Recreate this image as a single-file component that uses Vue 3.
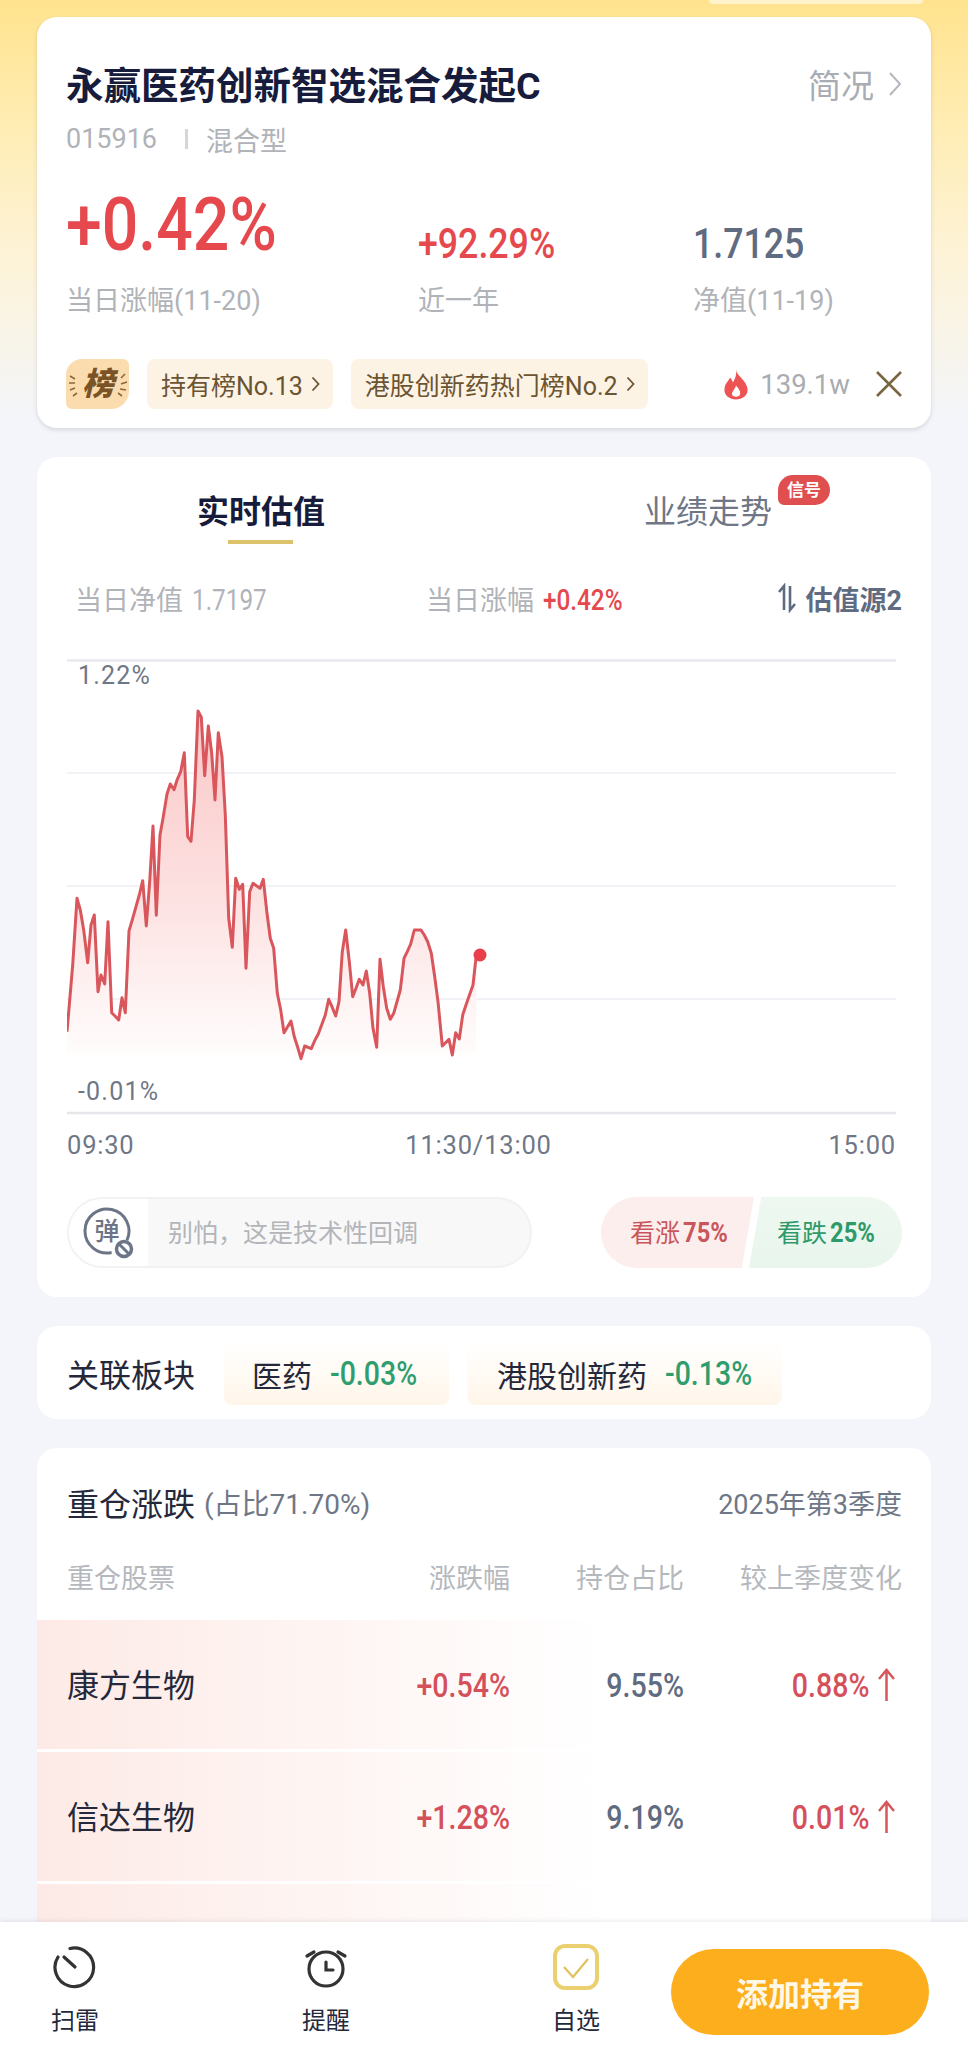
<template>
  <div class="page">
    <div class="scroll">
      <div class="top-pill"></div>

      <section class="card head-card">
        <div class="title-row">
          <div class="fund-name">永赢医药创新智选混合发起C</div>
          <div class="brief">
            简况
            <svg width="14" height="26" viewBox="0 0 14 26" fill="none" stroke="#b4b7bc" stroke-width="2"><path d="M2 2l10 11L2 24" /></svg>
          </div>
        </div>
        <div class="sub-row">
          <span class="code">015916</span>
          <i class="sub-line"></i>
          <span>混合型</span>
        </div>
        <div class="stats">
          <div class="stat">
            <div class="stat-val big red num">+0.42%</div>
            <div class="stat-label">当日涨幅(11-20)</div>
          </div>
          <div class="stat">
            <div class="stat-val red num">+92.29%</div>
            <div class="stat-label">近一年</div>
          </div>
          <div class="stat">
            <div class="stat-val slate num">1.7125</div>
            <div class="stat-label">净值(11-19)</div>
          </div>
        </div>
        <div class="tag-row">
          <svg class="rank-icon" width="64" height="50" viewBox="0 0 64 50">
            <path d="M16 0H57a6 6 0 0 1 6 6V32a18 18 0 0 1-18 18H6a6 6 0 0 1-6-6V16A16 16 0 0 1 16 0z" fill="#fbdcae" />
            <g stroke="#8a6a3c" stroke-width="1.6" fill="none">
              <path d="M4 17l5 3M3 24h6M4 31l5-2M7 37l4-3M59 15l-4 4M61 23l-6 2M60 31l-6-1M56 37l-4-3" />
            </g>
            <text x="32" y="36" text-anchor="middle" class="rank-text">榜</text>
          </svg>
          <span class="tag">持有榜No.13
            <svg width="9" height="16" viewBox="0 0 9 16" fill="none" stroke="#6b5431" stroke-width="1.8"><path d="M1.5 1.5L7.5 8l-6 6.5" /></svg>
          </span>
          <span class="tag">港股创新药热门榜No.2
            <svg width="9" height="16" viewBox="0 0 9 16" fill="none" stroke="#6b5431" stroke-width="1.8"><path d="M1.5 1.5L7.5 8l-6 6.5" /></svg>
          </span>
          <span class="hot">
            <svg width="28" height="33" viewBox="0 0 28 32">
              <path fill="#ee5353" d="M14 1C15 8 24 11 25.500 20C26.500 27 20 31 14 31C8 31 1.500 27 2.500 20C3 15 7 12 8 9C10 11 10.500 13 11 14C13 10 15 6 14 1Z" />
              <path fill="#fff" d="M14 17C16 20 19 22 18 26C17 29 11 29 10 26C9.500 23 13 21 14 17Z" />
            </svg>
            <span>139.1w</span>
          </span>
          <svg class="close" width="26" height="26" viewBox="0 0 26 26" stroke="#7a6542" stroke-width="2.600"><path d="M1 1l24 24M25 1L1 25" /></svg>
        </div>
      </section>

      <section class="card chart-card">
        <div class="tabs">
          <div class="tab active">实时估值</div>
          <div class="tab">业绩走势<span class="signal">信号</span></div>
        </div>
        <div class="metrics">
          <div class="metric m1">当日净值 <span class="num m-val">1.7197</span></div>
          <div class="metric m2">当日涨幅 <span class="num m-val red bold">+0.42%</span></div>
          <div class="source">
            <svg width="19" height="30" viewBox="0 0 19 30" fill="none" stroke="#5f6b80" stroke-width="2.600"><path d="M6 27V3L1 9M12 3v24l5-6" /></svg>
            估值源2
          </div>
        </div>
        <div class="chart">
          <svg width="829" height="458" viewBox="66 658 829 458">
            <defs>
              <linearGradient id="area" x1="0" y1="0" x2="0" y2="1">
                <stop offset="0" stop-color="#fac6c6" />
                <stop offset="0.55" stop-color="#fde2e2" />
                <stop offset="1" stop-color="#fffdfd" />
              </linearGradient>
            </defs>
            <line x1="66" x2="895" y1="660.500" y2="660.500" stroke="#e7e9ec" stroke-width="2.500" />
            <line v-for="y in midLines" :key="y" x1="66" x2="895" :y1="y" :y2="y" stroke="#f1f2f5" stroke-width="2" />
            <line x1="66" x2="895" y1="1113" y2="1113" stroke="#e4e6ea" stroke-width="2.500" />
            <path :d="areaPath" fill="url(#area)" />
            <path :d="linePath" fill="none" stroke="#d9575c" stroke-width="3" stroke-linejoin="round" />
            <circle cx="479" cy="955" r="6.500" fill="#e8404a" />
          </svg>
          <span class="y-label top">1.22%</span>
          <span class="y-label bottom">-0.01%</span>
        </div>
        <div class="times">
          <span>09:30</span>
          <span class="mid-time">11:30/13:00</span>
          <span>15:00</span>
        </div>
        <div class="bottom-row">
          <div class="danmu">
            <div class="danmu-icon">
              <svg width="52" height="52" viewBox="0 0 52 52" fill="none">
                <path d="M43.900 33.300A22 22 0 1 0 28.600 45.500" stroke="#6b7587" stroke-width="3" />
                <text x="24" y="33" text-anchor="middle" class="danmu-text">弹</text>
                <circle cx="41" cy="42" r="7.500" stroke="#6b7587" stroke-width="3.500" fill="#fff" />
                <path d="M36 37l10 10" stroke="#6b7587" stroke-width="3" />
              </svg>
            </div>
            <div class="danmu-text-box">别怕，这是技术性回调</div>
          </div>
          <div class="vote">
            <div class="vote-up">看涨<b class="num">75%</b></div>
            <div class="vote-down">看跌<b class="num">25%</b></div>
          </div>
        </div>
      </section>

      <section class="card sector-card">
        <div class="sector-title">关联板块</div>
        <div class="chip chip-a">医药<span class="num green">-0.03%</span></div>
        <div class="chip chip-b">港股创新药<span class="num green">-0.13%</span></div>
      </section>

      <section class="card hold-card">
        <div class="hold-head">
          <span class="hold-title">重仓涨跌</span>
          <span class="hold-ratio">(占比71.70%)</span>
          <span class="hold-season">2025年第3季度</span>
        </div>
        <div class="hold-grid hold-cols">
          <span>重仓股票</span>
          <span class="right">涨跌幅</span>
          <span class="right">持仓占比</span>
          <span class="right">较上季度变化</span>
        </div>
        <div v-for="row in holdings" :key="row.name" class="hold-grid hold-row">
          <span class="stock">{{ row.name }}</span>
          <span class="right num val rise">{{ row.pct }}</span>
          <span class="right num val slate">{{ row.weight }}</span>
          <span class="change">
            <span class="right num val rise">{{ row.change }}</span>
            <svg width="17" height="33" viewBox="0 0 17 33" fill="none" stroke="#d8575a" stroke-width="2.500"><path d="M8.500 33V2M1 11l7.500-9L16 11" /></svg>
          </span>
        </div>
        <div class="hold-grid hold-row"></div>
      </section>
    </div>

    <footer class="bar">
      <div class="bar-item scan">
        <svg width="44" height="44" viewBox="0 0 44 44" fill="none" stroke="#333" stroke-width="3.200" stroke-linecap="round">
          <path d="M17 3.500A19.300 19.300 0 1 1 5 12" />
          <path d="M22 22L11 12" />
        </svg>
        <span>扫雷</span>
      </div>
      <div class="bar-item remind">
        <svg width="44" height="44" viewBox="0 0 44 44" fill="none" stroke="#333" stroke-width="3.200" stroke-linecap="round">
          <circle cx="22" cy="24" r="17" />
          <path d="M3 11l7-4M34 7l7 4" />
          <path d="M22 17v8h7" />
        </svg>
        <span>提醒</span>
      </div>
      <div class="bar-item pick">
        <svg width="46" height="46" viewBox="0 0 46 46" fill="none">
          <rect x="2" y="2" width="42" height="42" rx="10" stroke="#ebd06f" stroke-width="4" />
          <path d="M11 23l9 10L35 15" stroke="#e2c25e" stroke-width="2.200" />
        </svg>
        <span>自选</span>
      </div>
      <button class="add-btn">添加持有</button>
    </footer>
  </div>
</template>

<script setup>
const raw = [
  [78, 1175], [95, 975], [108, 775], [118, 810], [128, 870], [140, 968], [150, 855], [160, 825], [171, 1055], [180, 1005],
  [191, 1032], [201, 845], [212, 1118], [222, 1128], [233, 1140], [243, 1073], [253, 1118], [264, 873], [275, 835], [285, 800],
  [295, 765], [305, 722], [316, 858], [326, 725], [336, 558], [346, 826], [357, 585], [367, 530], [378, 462], [388, 432],
  [399, 449], [409, 418], [419, 395], [430, 338], [440, 590], [450, 604], [460, 480], [471, 213], [481, 232], [491, 407],
  [502, 258], [512, 340], [522, 480], [532, 278], [543, 350], [553, 525], [563, 835], [574, 922], [584, 715], [595, 748],
  [605, 733], [615, 985], [626, 755], [636, 730], [657, 745], [667, 718], [678, 820], [688, 895], [698, 925], [709, 1060],
  [719, 1110], [729, 1178], [750, 1143], [760, 1190], [770, 1222], [780, 1256], [791, 1218], [811, 1226], [822, 1200], [832, 1182],
  [853, 1125], [863, 1078], [873, 1100], [884, 1128], [894, 1085], [904, 935], [914, 870], [925, 965], [935, 1070], [945, 1045],
  [955, 1018], [966, 1035], [976, 993], [986, 1060], [996, 1165], [1007, 1222], [1017, 958], [1027, 1040], [1037, 1105], [1048, 1138],
  [1058, 1120], [1078, 1050], [1089, 955], [1099, 935], [1109, 912], [1120, 870], [1140, 870], [1150, 885], [1160, 905], [1171, 940],
  [1181, 1010], [1191, 1085], [1204, 1218], [1224, 1198], [1234, 1245], [1244, 1178], [1255, 1197], [1265, 1125], [1275, 1095], [1296, 1035],
  [1306, 945],
]

// points were read off a 3x crop starting at (40, 640)
const points = raw.map(([x, y]) => [40 + x / 3, 640 + y / 3])
const linePath = 'M' + points.map(p => p[0].toFixed(1) + ' ' + p[1].toFixed(1)).join('L')
const areaPath = linePath + 'V1054H66Z'
const midLines = [773, 886, 999]

const holdings = [
  { name: '康方生物', pct: '+0.54%', weight: '9.55%', change: '0.88%' },
  { name: '信达生物', pct: '+1.28%', weight: '9.19%', change: '0.01%' },
]
</script>

<style>
html,
body {
  margin: 0;
  overflow: hidden;
}
</style>

<style scoped>
.page {
  width: 968px;
  height: 2061px;
  display: flex;
  flex-direction: column;
  overflow: hidden;
  background: #f3f5fa;
  font-family: Roboto, "Noto Sans CJK SC", sans-serif;
  color: #25283a;
}

.scroll {
  flex: 1;
  min-height: 0;
  overflow: hidden;
  padding: 0 37px;
  background: linear-gradient(180deg, #ffe38e 0, #ffedb5 130px, #fdf3d8 260px, #f3f5fa 420px);
}

.top-pill {
  width: 214px;
  height: 4px;
  margin-left: 672px;
  background: #fff3cd;
  border-radius: 0 0 14px 14px;
}

.card {
  background: #fff;
  border-radius: 20px;
}

/* the numbers in the app use a condensed face, none is installed */
.num {
  display: inline-block;
  font-weight: 500;
  transform: scaleX(0.85);
  transform-origin: left center;
}

.num.right {
  transform: scaleX(0.84);
  transform-origin: right center;
}

.red {
  color: #e5484d;
}

.rise {
  color: #d4505a;
}

.slate {
  color: #5f6b80;
}

.green {
  color: #2f9e6e;
}

.head-card {
  height: 411px;
  margin-top: 13px;
  padding: 41px 29px 0 29px;
  box-sizing: border-box;
  box-shadow: 0 2px 4px rgba(60, 60, 80, 0.16);
}

.title-row {
  display: flex;
  align-items: center;
  justify-content: space-between;
  height: 48px;
}

.fund-name {
  font-size: 37.500px;
  font-weight: 700;
  color: #171c3c;
  white-space: nowrap;
}

.brief {
  display: flex;
  align-items: center;
  gap: 14px;
  padding-top: 3px;
  font-size: 33px;
  color: #a9adb3;
}

.sub-row {
  display: flex;
  align-items: center;
  height: 36px;
  margin-top: 15px;
  font-size: 27px;
  color: #b0b3b8;
}

.sub-line {
  width: 3px;
  height: 20px;
  margin: 0 18px 0 28px;
  background: #d4d6da;
}

.stats {
  display: grid;
  grid-template-columns: 352px 275px 1fr;
  margin-top: 16px;
}

.stat-val {
  display: flex;
  align-items: flex-end;
  height: 92px;
  box-sizing: border-box;
  font-size: 42px;
  line-height: 1;
  white-space: nowrap;
}

.stat-val.big {
  padding-bottom: 3px;
  font-size: 74px;
  transform: scaleX(0.87);
}

.stat-label {
  margin-top: 18px;
  font-size: 27px;
  line-height: 36px;
  color: #b0b3b8;
  white-space: nowrap;
}

.tag-row {
  display: flex;
  align-items: center;
  margin-top: 40px;
}

.rank-icon {
  margin-right: 17px;
  flex: none;
}

.rank-text {
  font-family: "Noto Sans CJK SC", sans-serif;
  font-size: 32px;
  font-weight: 900;
  font-style: italic;
  fill: #7a5326;
}

.tag {
  display: flex;
  align-items: center;
  gap: 8px;
  height: 50px;
  padding: 0 13px 0 14px;
  margin-right: 18px;
  border-radius: 8px;
  background: #fdf3e5;
  color: #6b5431;
  font-size: 25px;
  white-space: nowrap;
}

.hot {
  display: flex;
  align-items: center;
  gap: 10px;
  margin-left: auto;
  font-size: 27.500px;
  color: #a9acb1;
}

.close {
  margin-left: 26px;
}

.chart-card {
  height: 840px;
  margin-top: 29px;
  padding: 0 29px 0 30px;
  box-sizing: border-box;
}

.tabs {
  display: flex;
  height: 110px;
}

.tab {
  position: relative;
  height: 110px;
  line-height: 110px;
  font-size: 32px;
  color: #6f7787;
  margin-left: 319px;
  white-space: nowrap;
}

.tab.active {
  margin-left: 130px;
  font-weight: 700;
  color: #171c3c;
}

.tab.active::after {
  content: "";
  position: absolute;
  left: 31px;
  bottom: 23px;
  width: 65px;
  height: 4px;
  background: #dcc26a;
}

.signal {
  position: absolute;
  right: -58px;
  top: 18px;
  width: 52px;
  height: 30px;
  border-radius: 15px 15px 15px 6px;
  background: #e04f4f;
  color: #fff;
  font-size: 17px;
  font-weight: 700;
  line-height: 30px;
  text-align: center;
}

.metrics {
  display: flex;
  align-items: center;
  height: 44px;
  margin-top: 9px;
  font-size: 27px;
  color: #b0b3b8;
}

.metric {
  white-space: nowrap;
}

.m1 {
  margin-left: 8px;
  width: 351px;
}

.m-val {
  margin-left: 2px;
  font-size: 30px;
  font-weight: 400;
  transform: scaleX(0.81);
}

.m-val.bold {
  font-weight: 500;
}

.source {
  display: flex;
  align-items: center;
  gap: 9px;
  margin-left: auto;
  font-weight: 700;
  color: #5f6b80;
}

.chart {
  position: relative;
  width: 829px;
  height: 458px;
  margin-top: 38px;
}

.chart svg {
  display: block;
}

.y-label {
  position: absolute;
  left: 11px;
  font-size: 25px;
  line-height: 30px;
  letter-spacing: 1.200px;
  color: #6f7787;
}

.y-label.top {
  top: 3px;
}

.y-label.bottom {
  top: 419px;
}

.times {
  display: flex;
  justify-content: space-between;
  width: 829px;
  margin-top: 11px;
  font-size: 25.500px;
  line-height: 36px;
  letter-spacing: 0.800px;
  color: #6f7787;
}

.mid-time {
  margin-right: 6px;
}

.bottom-row {
  display: flex;
  justify-content: space-between;
  margin-top: 34px;
}

.danmu {
  display: flex;
  width: 465px;
  height: 71px;
  box-sizing: border-box;
  border: 2px solid #f1f2f3;
  border-radius: 36px;
  background: #f8f8f9;
  overflow: hidden;
}

.danmu-icon {
  display: flex;
  align-items: center;
  justify-content: center;
  width: 79px;
  flex: none;
  background: #fff;
}

.danmu-text {
  font-family: "Noto Sans CJK SC", sans-serif;
  font-size: 25px;
  fill: #6b7587;
  font-weight: 500;
}

.danmu-text-box {
  padding-left: 20px;
  font-size: 25px;
  line-height: 70px;
  color: #b3b5b9;
}

.vote {
  display: flex;
  width: 301px;
  height: 71px;
  font-size: 25px;
  line-height: 71px;
}

.vote b {
  margin-left: 3px;
  font-size: 28px;
  font-weight: 700;
}

.vote-up,
.vote-down {
  flex: none;
  width: 153px;
  box-sizing: border-box;
}

.vote-up {
  padding-left: 29px;
  color: #c9565b;
  background: #fdeeee;
  border-radius: 36px 0 0 36px;
  clip-path: polygon(0 0, 100% 0, 92% 100%, 0 100%);
}

.vote-down {
  margin-left: -5px;
  padding-left: 28px;
  color: #2e9a6a;
  background: linear-gradient(180deg, #eef8f1, #e8f5ec);
  border-radius: 0 36px 36px 0;
  clip-path: polygon(8% 0, 100% 0, 100% 100%, 0 100%);
}

.sector-card {
  display: flex;
  align-items: center;
  height: 93px;
  margin-top: 29px;
  padding: 0 30px;
  box-sizing: border-box;
}

.sector-title {
  margin-right: 29px;
  font-size: 32px;
}

.chip {
  display: flex;
  align-items: center;
  gap: 18px;
  height: 63px;
  margin-top: 2px;
  margin-right: 18px;
  box-sizing: border-box;
  border-radius: 8px;
  background: linear-gradient(180deg, #fff, #fff6ea);
  font-size: 30px;
  white-space: nowrap;
}

.chip .num {
  font-size: 33.500px;
}

.chip-a {
  width: 225px;
  padding-left: 28px;
}

.chip-b {
  width: 315px;
  padding-left: 30px;
}

.hold-card {
  margin-top: 29px;
  border-radius: 20px 20px 0 0;
  padding-bottom: 40px;
}

.hold-head {
  display: flex;
  align-items: center;
  height: 48px;
  padding: 30px 29px 0 30px;
}

.hold-title {
  font-size: 32px;
}

.hold-ratio {
  margin-left: 9px;
  font-size: 28px;
  color: #6f7787;
}

.hold-season {
  margin-left: auto;
  font-size: 27px;
  color: #6f7787;
}

.hold-grid {
  display: grid;
  grid-template-columns: 1fr 130px 174px 218px;
  align-items: center;
  padding: 0 29px 0 30px;
  white-space: nowrap;
}

.hold-cols {
  height: 50px;
  margin-top: 25px;
  margin-bottom: 19px;
  font-size: 27px;
  color: #b5b8bd;
}

.right {
  text-align: right;
}

.hold-row {
  height: 129px;
  margin-bottom: 3px;
  background: linear-gradient(90deg, #fdeae6 0, #fff 565px);
}

.stock {
  padding-bottom: 4px;
  font-size: 32px;
}

.val {
  font-size: 34px;
}

.change {
  display: flex;
  align-items: center;
  justify-content: flex-end;
  gap: 9px;
  padding-right: 7px;
}

.bar {
  position: relative;
  flex: none;
  height: 139px;
  background: #fff;
  box-shadow: 0 -2px 4px rgba(60, 60, 80, 0.08);
}

.bar-item {
  position: absolute;
  top: 23px;
  display: flex;
  flex-direction: column;
  align-items: center;
  width: 70px;
  font-size: 24px;
  line-height: 34px;
}

.bar-item span {
  margin-top: 15px;
}

.scan {
  left: 40px;
}

.remind {
  left: 291px;
}

.pick {
  top: 22px;
  left: 541px;
}

.pick span {
  margin-top: 14px;
}

.add-btn {
  position: absolute;
  left: 671px;
  top: 27px;
  width: 258px;
  height: 86px;
  border: none;
  border-radius: 43px;
  background: #fdae1c;
  color: #fff8e6;
  font-family: "Noto Sans CJK SC", sans-serif;
  font-size: 32px;
  font-weight: 700;
}
</style>
